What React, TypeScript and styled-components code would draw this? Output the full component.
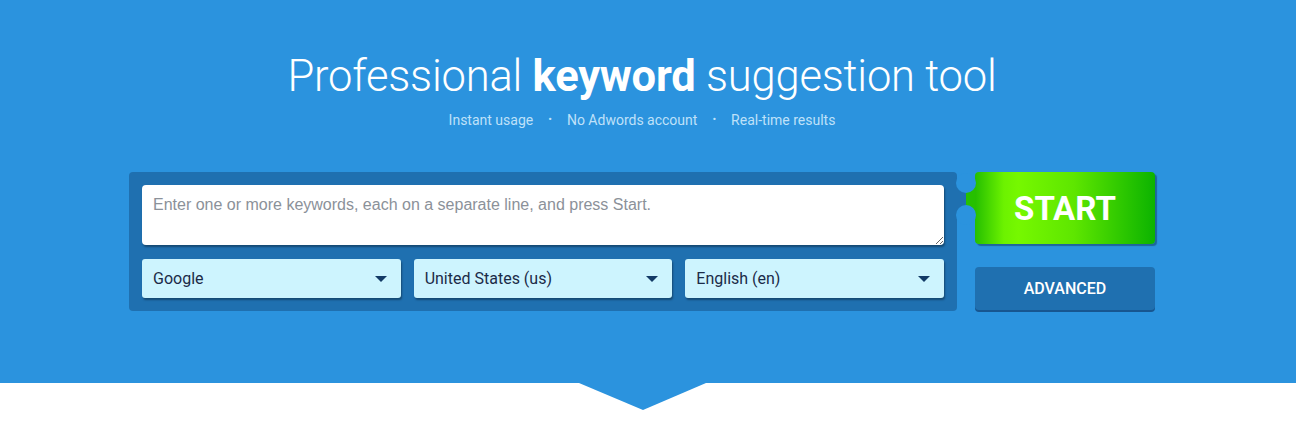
import { createGlobalStyle, styled } from "styled-components";

const colors = {
	hero: "#2b93de",
	panel: "#1f70b0",
	select: "#cdf4fe",
	ink: "#1b2b48",
	sub: "#bfe1f9",
};

const GlobalStyle = createGlobalStyle`
	* { box-sizing: border-box; }
	body {
		margin: 0;
		background: #fff;
		font-family: Roboto, "Liberation Sans", sans-serif;
	}
`;

export default function App() {
	return (
		<>
			<GlobalStyle />
			<Hero>
				<Title>Professional <strong>keyword</strong> suggestion tool</Title>
				<Features>
					<span>Instant usage</span>
					<Dot>•</Dot>
					<span>No Adwords account</span>
					<Dot>•</Dot>
					<span>Real-time results</span>
				</Features>

				<FormRow>
					<Panel>
						<KeywordInput placeholder="Enter one or more keywords, each on a separate line, and press Start." />
						<SelectRow>
							<Select>Google<Caret /></Select>
							<Select>United States (us)<Caret /></Select>
							<Select>English (en)<Caret /></Select>
						</SelectRow>
						<Bridge />
					</Panel>
					<Actions>
						<StartButton>START</StartButton>
						<AdvancedButton>ADVANCED</AdvancedButton>
					</Actions>
				</FormRow>
			</Hero>
			<PointerRow>
				<Pointer />
			</PointerRow>
		</>
	);
}

const Hero = styled.section`
	height: 383px;
	background: ${colors.hero};
	padding: 51px 12px 0 0;
	display: flex;
	flex-direction: column;
	align-items: center;
`;

const PointerRow = styled.div`
	display: flex;
	justify-content: center;
	padding-right: 11px;
`;

const Pointer = styled.div`
	width: 127px;
	height: 27px;
	background: ${colors.hero};
	clip-path: polygon(0 0, 100% 0, 50.4% 100%);
`;

const Title = styled.h1`
	margin: 0;
	font-size: 43.5px;
	font-weight: 300;
	line-height: 52px;
	color: #fff;
	letter-spacing: -0.2px;

	strong {
		font-weight: 700;
	}
`;

const Features = styled.div`
	margin-top: 5px;
	display: flex;
	align-items: center;
	gap: 15px;
	font-size: 14px;
	line-height: 24px;
	color: ${colors.sub};
`;

const Dot = styled.span`
	font-size: 11px;
`;

const FormRow = styled.div`
	margin-top: 40px;
	display: flex;
	gap: 18px;
	align-items: flex-start;
`;

const Panel = styled.div`
	position: relative;
	width: 828px;
	padding: 13px;
	background: ${colors.panel};
	border-radius: 4px;
	display: flex;
	flex-direction: column;
	gap: 14px;
`;

const KeywordInput = styled.textarea`
	display: block;
	width: 100%;
	height: 60px;
	border: none;
	border-radius: 4px;
	padding: 11px 11px;
	font-family: "Liberation Sans", Arial, sans-serif;
	font-size: 16px;
	color: ${colors.ink};
	box-shadow: 1px 2px 2px rgba(0, 0, 0, 0.35);
	outline: none;

	&::placeholder {
		color: #8b9199;
	}
`;

const SelectRow = styled.div`
	display: grid;
	grid-template-columns: repeat(3, 1fr);
	gap: 13px;
`;

const Select = styled.div`
	height: 39px;
	padding: 0 14px 0 11px;
	display: flex;
	align-items: center;
	justify-content: space-between;
	background: ${colors.select};
	border-radius: 3px;
	font-size: 16px;
	color: ${colors.ink};
	box-shadow: 1px 2px 2px rgba(0, 0, 0, 0.35);
`;

const Caret = styled.span`
	width: 0;
	height: 0;
	border-left: 6px solid transparent;
	border-right: 6px solid transparent;
	border-top: 6px solid #123a66;
`;

const Bridge = styled.div`
	position: absolute;
	left: 100%;
	top: 10px;
	width: 18px;
	height: 34px;
	background: linear-gradient(to right, ${colors.panel} 0 50%, #26c000 50% 100%);

	&::before,
	&::after {
		content: "";
		position: absolute;
		left: -1px;
		width: 20px;
		height: 20px;
		border-radius: 50%;
		background: ${colors.hero};
	}

	&::before {
		top: -9px;
	}

	&::after {
		bottom: -9px;
	}
`;

const Actions = styled.div`
	width: 180px;
	display: flex;
	flex-direction: column;
	gap: 23px;
`;

const StartButton = styled.button`
	height: 72px;
	border: none;
	border-radius: 4px;
	background: linear-gradient(to right, #25be00 0%, #6cf200 16%, #76f800 24%, #5ee600 55%, #0cb300 100%);
	box-shadow: 2px 2px 1px rgba(0, 0, 0, 0.3);
	font-family: Roboto, "Liberation Sans", sans-serif;
	font-size: 33px;
	font-weight: 700;
	color: #fff;
	cursor: pointer;
`;

const AdvancedButton = styled.button`
	height: 43px;
	border: none;
	border-radius: 4px;
	background: ${colors.panel};
	box-shadow: 0 2px 0 #175690;
	font-family: Roboto, "Liberation Sans", sans-serif;
	font-size: 16px;
	font-weight: 500;
	color: #fff;
	cursor: pointer;
`;
